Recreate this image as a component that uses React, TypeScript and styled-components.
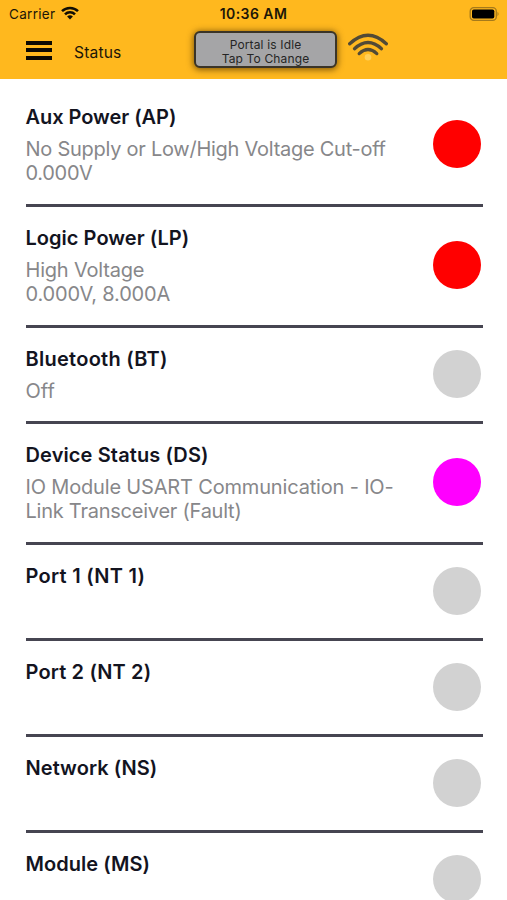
import React from "react";
import styled, { createGlobalStyle } from "styled-components";

const GlobalStyle = createGlobalStyle`
  * { box-sizing: border-box; }
  html, body { margin: 0; background: #fff; }
  body { height: 900px; overflow: hidden; font-family: Inter, "Liberation Sans", sans-serif; }
`;

const Screen = styled.div`
  width: 507px;
  height: 900px;
  overflow: hidden;
  background: #fff;
`;

const Header = styled.header`
  height: 79.4px;
  background: #ffb81e;
  color: #1c1608;
`;

const StatusBar = styled.div`
  display: grid;
  grid-template-columns: 1fr auto 1fr;
  align-items: center;
  height: 27px;
  padding: 0 7px 0 9px;
`;

const Carrier = styled.div`
  display: flex;
  align-items: center;
  gap: 6px;
  font-size: 13.5px;
  letter-spacing: 0.3px;
  svg { margin: -2px 0 0 0; }
`;

const Clock = styled.div`
  position: relative;
  left: -1px;
  font-size: 14px;
  font-weight: 600;
  letter-spacing: 0.45px;
`;

const BatterySlot = styled.div`
  display: flex;
  justify-content: flex-end;
`;

const NavBar = styled.div`
  display: flex;
  align-items: flex-start;
  height: 52px;
  padding-left: 26px;
`;

const MenuButton = styled.button`
  display: flex;
  flex-direction: column;
  gap: 3.5px;
  width: 26px;
  margin: 13.5px 0 0;
  padding: 0;
  border: 0;
  background: none;
`;

const MenuBar = styled.span`
  height: 4px;
  background: #0d0a03;
`;

const PageTitle = styled.h1`
  width: 120px;
  margin: 16px 0 0 22px;
  font-size: 15.6px;
  line-height: 20px;
  font-weight: 400;
  letter-spacing: 0.15px;
`;

const PortalButton = styled.button`
  display: block;
  width: 143px;
  height: 37px;
  margin-top: 4px;
  padding: 4px 0 0;
  border: 2px solid #3a3428;
  border-radius: 6px;
  background: #a5a5a7;
  box-shadow: 0 1px 6px 1px rgba(70, 45, 0, 0.65);
  color: #252525;
  font-family: inherit;
  font-size: 12px;
  line-height: 14px;
  letter-spacing: 0.15px;
  text-align: center;
`;

const Signal = styled.div`
  margin: 5px 0 0 10px;
`;

const List = styled.main`
  padding: 6.5px 24.5px 0 25.5px;
`;

const Row = styled.section<{ $tall: boolean }>`
  display: flex;
  align-items: center;
  justify-content: space-between;
  height: ${(p) => (p.$tall ? "121px" : "96px")};
  padding: 0 1.5px 1.5px 0;
  border-bottom: 3px solid #464551;
`;

const Info = styled.div`
  align-self: stretch;
  width: 385px;
  padding-top: 18.2px;
`;

const Name = styled.h2<{ $spacing: number }>`
  margin: 0 0 7px;
  color: #13141f;
  font-size: 20px;
  line-height: 26px;
  font-weight: 600;
  letter-spacing: ${(p) => p.$spacing}px;
  white-space: nowrap;
`;

const Detail = styled.p<{ $spacing: number }>`
  margin: 0;
  color: #87878a;
  font-size: 20px;
  line-height: 24px;
  font-weight: 400;
  letter-spacing: ${(p) => p.$spacing}px;
  white-space: nowrap;
`;

const Lamp = styled.div<{ $color: string }>`
  flex: none;
  width: 48px;
  height: 48px;
  border-radius: 50%;
  background: ${(p) => p.$color};
`;

interface Line {
  text: string;
  spacing: number;
}

interface Item {
  name: string;
  spacing: number;
  lines: Line[];
  color: string;
}

const RED = "#ff0000";
const GREY = "#d2d2d2";
const MAGENTA = "#ff00ff";

const items: Item[] = [
  {
    name: "Aux Power (AP)",
    spacing: -0.05,
    lines: [
      { text: "No Supply or Low/High Voltage Cut-off", spacing: -0.26 },
      { text: "0.000V", spacing: -0.3 },
    ],
    color: RED,
  },
  {
    name: "Logic Power (LP)",
    spacing: 0.03,
    lines: [
      { text: "High Voltage", spacing: -0.2 },
      { text: "0.000V, 8.000A", spacing: -0.18 },
    ],
    color: RED,
  },
  { name: "Bluetooth (BT)", spacing: 0.27, lines: [{ text: "Off", spacing: 0 }], color: GREY },
  {
    name: "Device Status (DS)",
    spacing: 0.12,
    lines: [
      { text: "IO Module USART Communication - IO-", spacing: -0.17 },
      { text: "Link Transceiver (Fault)", spacing: -0.24 },
    ],
    color: MAGENTA,
  },
  { name: "Port 1 (NT 1)", spacing: 0.28, lines: [], color: GREY },
  { name: "Port 2 (NT 2)", spacing: 0.15, lines: [], color: GREY },
  { name: "Network (NS)", spacing: 0.06, lines: [], color: GREY },
  { name: "Module (MS)", spacing: 0.05, lines: [], color: GREY },
];

const CarrierWifi = () => (
  <svg width="18" height="14" viewBox="0 0 18 14" fill="none" stroke="#120e04" strokeWidth="2.5">
    <path d="M1 5.2a11.3 11.3 0 0 1 16 0" />
    <path d="M4 8.4a7 7 0 0 1 10 0" />
    <path d="M9 13.6l-2.9-3a4.1 4.1 0 0 1 5.8 0z" fill="#120e04" stroke="none" />
  </svg>
);

const Battery = () => (
  <svg width="31" height="14" viewBox="0 0 31 14">
    <rect x="1.2" y="0.7" width="26.1" height="12.6" rx="3.6" fill="none" stroke="#a67a1b" strokeWidth="1.3" />
    <rect x="3" y="2.5" width="22.3" height="9" rx="1.8" fill="#000" />
    <path d="M28.5 4.8q2.2 2.2 0 4.4z" fill="#a67a1b" />
  </svg>
);

const PortalSignal = () => (
  <svg width="42" height="30" viewBox="0 0 42 30" fill="none" stroke="#524a36" strokeWidth="3.3" strokeLinecap="round">
    <path d="M2.7 11.8q18.3-17 36.6 0" />
    <path d="M7.5 16.7q13.5-12.4 27 0" />
    <path d="M12.2 21.6q8.8-8 17.6 0" />
    <circle cx="21" cy="25.2" r="3.3" fill="#ffcf59" stroke="none" />
  </svg>
);

export default function App() {
  return (
    <Screen>
      <GlobalStyle />
      <Header>
        <StatusBar>
          <Carrier>
            Carrier
            <CarrierWifi />
          </Carrier>
          <Clock>10:36 AM</Clock>
          <BatterySlot>
            <Battery />
          </BatterySlot>
        </StatusBar>
        <NavBar>
          <MenuButton aria-label="Menu">
            <MenuBar />
            <MenuBar />
            <MenuBar />
          </MenuButton>
          <PageTitle>Status</PageTitle>
          <PortalButton>
            Portal is Idle
            <br />
            Tap To Change
          </PortalButton>
          <Signal>
            <PortalSignal />
          </Signal>
        </NavBar>
      </Header>
      <List>
        {items.map((item) => (
          <Row key={item.name} $tall={item.lines.length > 1}>
            <Info>
              <Name $spacing={item.spacing}>{item.name}</Name>
              {item.lines.map((line) => (
                <Detail key={line.text} $spacing={line.spacing}>
                  {line.text}
                </Detail>
              ))}
            </Info>
            <Lamp $color={item.color} />
          </Row>
        ))}
      </List>
    </Screen>
  );
}
